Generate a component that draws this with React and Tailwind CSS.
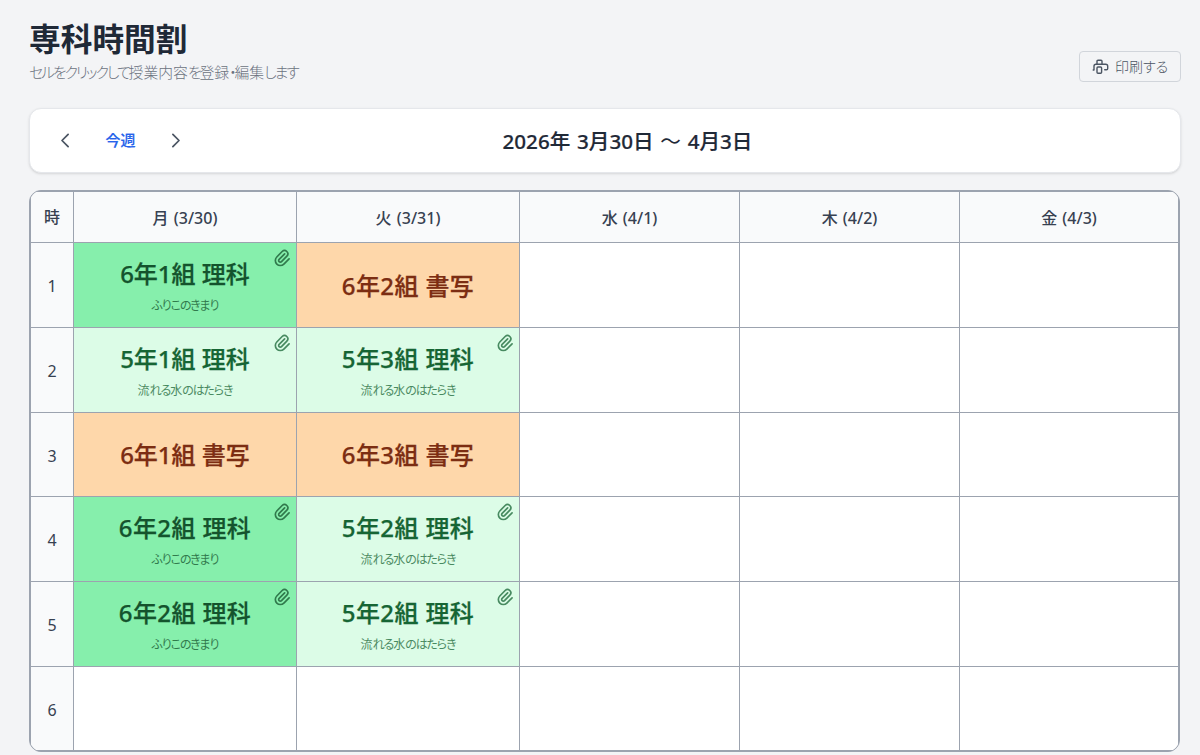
import React from 'react';

const days = ['月 (3/30)', '火 (3/31)', '水 (4/1)', '木 (4/2)', '金 (4/3)'];

const styles = {
  science6: 'bg-[#86efac] text-[#14532d]',
  science5: 'bg-[#dcfce7] text-[#166534]',
  writing: 'bg-[#fed7aa] text-[#7c2d12]',
};

const science6 = (title) => ({ title, note: 'ふりこのきまり', kind: 'science6' });
const science5 = (title) => ({ title, note: '流れる水のはたらき', kind: 'science5' });
const writing = (title) => ({ title, kind: 'writing' });

const periods = [
  [science6('6年1組 理科'), writing('6年2組 書写')],
  [science5('5年1組 理科'), science5('5年3組 理科')],
  [writing('6年1組 書写'), writing('6年3組 書写')],
  [science6('6年2組 理科'), science5('5年2組 理科')],
  [science6('6年2組 理科'), science5('5年2組 理科')],
  [],
];

const Icon = ({ d, className }) => (
  <svg className={className} fill="none" stroke="currentColor" strokeWidth="2" strokeLinecap="round" strokeLinejoin="round" viewBox="0 0 24 24">
    <path d={d} />
  </svg>
);

const PrinterIcon = () => (
  <svg className="w-[17px] h-4" fill="none" stroke="currentColor" strokeWidth="1.4" strokeLinecap="round" strokeLinejoin="round" viewBox="0 0 17 16">
    <path d="M5 5.3V2.2q0-1 1-1h3q1 0 1 1v3.1M1.2 11h.8M2 11V7.3q0-2 2-2h9.7q2 0 2 2v2.2q0 1.2-1.2 1.2h-1.8" />
    <rect x="5" y="8" width="4.6" height="6.2" rx="1" />
  </svg>
);

// Kana are set tighter than the kanji around them
const Kana = ({ children, className }) =>
  children.split(/([ぁ-ヶ・]+)/).map((part, i) => (
    i % 2 ? <span key={i} className={className}>{part}</span> : part
  ));

const Lesson = ({ lesson }) => (
  <div className={`relative h-full flex flex-col items-center justify-center ${styles[lesson.kind]}`}>
    <div className={`text-[24px] leading-[30px] font-medium [-webkit-text-stroke:0.25px] whitespace-nowrap ${lesson.note ? 'mt-[3px]' : 'mt-px'} ${lesson.title.includes('1') ? '' : 'tracking-[0.4px]'}`}>
      {lesson.title}
    </div>
    {lesson.note && (
      <>
        <div className="mt-2 text-[12px] leading-[17px] opacity-75 whitespace-nowrap">
          <Kana className="tracking-[-1.1px]">{lesson.note}</Kana>
        </div>
        <Icon
          className="absolute top-[5px] right-1 w-5 h-5 opacity-75"
          d="M15.172 7l-6.586 6.586a2 2 0 102.828 2.828l6.414-6.586a4 4 0 00-5.656-5.656l-6.415 6.585a6 6 0 108.486 8.486L20.5 13"
        />
      </>
    )}
  </div>
);

const App = () => (
  <div className="h-[755px] overflow-hidden bg-[#f3f4f6] pl-[29px] pr-[19px] pt-5 font-['Noto_Sans','Noto_Sans_CJK_JP',sans-serif] [font-feature-settings:'palt']">
    <header className="flex items-end justify-between h-[62px]">
      <div className="h-full">
        <h1 className="text-[31.7px] leading-[38px] font-bold text-[#1f2937]">専科時間割</h1>
        <p className="mt-[3px] text-[14.8px] leading-[22px] font-light text-[#6b7280]">
          <Kana className="tracking-[-2px]">セルをクリックして授業内容を登録・編集します</Kana>
        </p>
      </div>
      <button className="flex items-center justify-center gap-1.5 w-[102px] h-[31px] rounded border border-[#d1d5db] text-[14px] font-light text-[#4b5563]">
        <PrinterIcon />
        印刷する
      </button>
    </header>

    <nav className="mt-[26px] flex items-center h-[65px] rounded-xl border border-[#e5e7eb] bg-white shadow-sm">
      <div className="flex items-center pl-[25px] w-[156px] justify-between text-[#4b5563]">
        <button><Icon className="w-[21px] h-[21px]" d="M15 19l-7-7 7-7" /></button>
        <button className="text-[15px] font-medium [-webkit-text-stroke:0.2px] text-[#2563eb]">今週</button>
        <button><Icon className="w-[21px] h-[21px]" d="M9 5l7 7-7 7" /></button>
      </div>
      <h2 className="flex-1 pr-[111px] pt-0.5 text-center text-[20.6px] font-medium [-webkit-text-stroke:0.2px] text-[#1f2937] [word-spacing:1.4px]">
        2026年 3月30日 <span className="font-normal [-webkit-text-stroke:0px]">～</span> 4月3日
      </h2>
    </nav>

    <div className="mt-[17px] w-[1151px] h-[562px] rounded-xl border border-[#9ca3af] bg-[#9ca3af] p-px overflow-hidden">
      <div className="grid h-full w-full gap-px grid-cols-[42px_222px_222px_219px_219px_1fr] grid-rows-[50px_84px_84px_83px_84px_84px_1fr] text-[16px] text-[#374151]">
        <div className="flex items-center justify-center bg-[#f9fafb] font-medium">時</div>
        {days.map((day) => (
          <div key={day} className="flex items-center justify-center bg-[#f9fafb] font-medium pt-0.5 [word-spacing:1px]">{day}</div>
        ))}
        {periods.map((lessons, i) => (
          <React.Fragment key={i}>
            <div className="flex items-center justify-center bg-[#f9fafb] pt-0.5">{i + 1}</div>
            {days.map((day, j) => (
              <div key={day} className="bg-white">
                {lessons[j] && <Lesson lesson={lessons[j]} />}
              </div>
            ))}
          </React.Fragment>
        ))}
      </div>
    </div>
  </div>
);

export default App;
